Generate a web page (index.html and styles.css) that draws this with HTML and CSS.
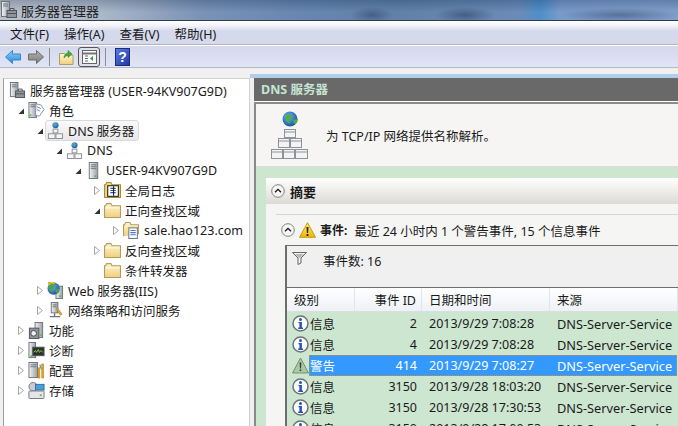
FILE: index.html
```html
<!DOCTYPE html>
<html lang="zh-CN">
<head>
    <meta charset="UTF-8">
    <title>服务器管理器</title>
    <link rel="stylesheet" href="styles.css">
</head>
<body>
    <svg class="defs" width="0" height="0">
        <defs>
            <linearGradient id="tower" x1="0" y1="0" x2="1" y2="0"><stop offset="0" stop-color="#f4f4f4"/><stop offset="1" stop-color="#9a9ea4"/></linearGradient>
            <linearGradient id="fold" x1="0" y1="0" x2="0" y2="1"><stop offset="0" stop-color="#fff6cf"/><stop offset="1" stop-color="#f0cf7e"/></linearGradient>
            <radialGradient id="globe" cx=".4" cy=".35" r=".7"><stop offset="0" stop-color="#6fb4e8"/><stop offset="1" stop-color="#14509c"/></radialGradient>
            <linearGradient id="tri" x1="0" y1="0" x2="0" y2="1"><stop offset="0" stop-color="#fff27a"/><stop offset="1" stop-color="#f0b400"/></linearGradient>
            <linearGradient id="backArrow" x1="0" y1="0" x2="0" y2="1"><stop offset="0" stop-color="#8fd0f8"/><stop offset="1" stop-color="#1f8ade"/></linearGradient>
            <linearGradient id="fwdArrow" x1="0" y1="0" x2="0" y2="1"><stop offset="0" stop-color="#b4b4b0"/><stop offset="1" stop-color="#7c7c78"/></linearGradient>

            <symbol id="a-open" viewBox="0 0 8 9"><path d="M7 2.500V8H1.500z" fill="#333"/></symbol>
            <symbol id="a-closed" viewBox="0 0 8 9"><path d="M1.500 .5L6.500 4.500 1.500 8.500z" fill="#fff" stroke="#a6a6a6"/></symbol>

            <symbol id="i-tower" viewBox="0 0 16 18">
                <rect x="3.500" y=".5" width="9" height="17" fill="url(#tower)" stroke="#6e747c"/>
                <path d="M5 3h6M5 5h6M5 7h6" stroke="#70767e"/>
                <rect x="9" y="14" width="2" height="2" fill="#59c03c"/>
            </symbol>
            <symbol id="i-manager" viewBox="0 0 16 18">
                <rect x=".5" y=".5" width="8" height="15" fill="url(#tower)" stroke="#6e747c"/>
                <path d="M2 3h5M2 5h5" stroke="#70767e"/>
                <rect x="6" y="9.500" width="9.500" height="7" fill="#8f9499" stroke="#50555b"/>
                <path d="M9 9.500v-2h4v2M6 12.500h9.500" fill="none" stroke="#50555b"/>
            </symbol>
            <symbol id="i-role" viewBox="0 0 17 18">
                <rect x=".5" y=".5" width="8" height="16" fill="url(#tower)" stroke="#6e747c"/>
                <path d="M2 3h5M2 5h5" stroke="#70767e"/>
                <rect x="1" y="13" width="2" height="2" fill="#59c03c"/>
                <path d="M8 2l5 1 3.500 5-5 7-4-1z" fill="#fdfdfd" stroke="#7f8fa8"/>
                <path d="M9 5l4 2M9 8l3 1.500" stroke="#5d86c0"/>
            </symbol>
            <symbol id="i-dns" viewBox="0 0 18 18">
                <circle cx="9" cy="3.500" r="3.200" fill="url(#globe)"/>
                <path d="M7.500 2l2 .5-1 2z" fill="#4fae46"/>
                <rect x="6.500" y="7.500" width="5" height="4" fill="#f6f6f6" stroke="#8a8e96"/>
                <rect x="1.500" y="12.500" width="7" height="5" fill="#f6f6f6" stroke="#8a8e96"/>
                <rect x="9.500" y="12.500" width="7" height="5" fill="#f6f6f6" stroke="#8a8e96"/>
            </symbol>
            <symbol id="i-dns-large" viewBox="0 0 38 48">
                <circle cx="19" cy="8" r="7.500" fill="url(#globe)"/>
                <path d="M15 3l5 1 1 3-3 2 1 4-4-3zM22 9l5-1-1 4-3 1z" fill="#4fae46"/>
                <g fill="#f3f3f3" stroke="#8e9299">
                    <rect x="13.500" y="18.500" width="11" height="8"/>
                    <rect x="7.500" y="27.500" width="11" height="9"/>
                    <rect x="19.500" y="27.500" width="11" height="9"/>
                    <rect x=".5" y="38.500" width="11" height="9"/>
                    <rect x="12.500" y="38.500" width="11" height="9"/>
                    <rect x="24.500" y="38.500" width="12" height="9"/>
                </g>
                <path d="M14 21h10M8 30h10M20 30h10M1 41h10M13 41h10M25 41h11" stroke="#8e9299"/>
            </symbol>
            <symbol id="i-folder" viewBox="0 0 16 14">
                <path d="M.5 13.500v-11h1l1-2h4l1 2h8v11z" fill="url(#fold)" stroke="#b59b5c"/>
                <path d="M1.500 4.500h13" stroke="#fffbe6"/>
            </symbol>
            <symbol id="i-zone" viewBox="0 0 16 16">
                <path d="M.5 13.500v-11h1l1-2h4l1 2h7v9" fill="url(#fold)" stroke="#b59b5c"/>
                <rect x="5.500" y="5.500" width="8" height="10" fill="#fff" stroke="#6c7a90"/>
                <path d="M7 8h5M7 10h5M7 12h5" stroke="#4f78b8"/>
            </symbol>
            <symbol id="i-log" viewBox="0 0 16 16">
                <path d="M.5 14.500v-12h1l1-2h4l1 2h8v12z" fill="#f4d474" stroke="#a58a40"/>
                <rect x="3.500" y="3.500" width="10" height="10" fill="#fff" stroke="#222"/>
                <path d="M6 6h5M6 8h5M6 10h5" stroke="#2456a8"/>
                <path d="M9 4v9" stroke="#222"/>
            </symbol>
            <symbol id="i-web" viewBox="0 0 18 18">
                <rect x="9.500" y="4.500" width="7" height="13" fill="url(#tower)" stroke="#6e747c"/>
                <rect x="13" y="14" width="2" height="2" fill="#59c03c"/>
                <circle cx="7" cy="7" r="6.500" fill="url(#globe)"/>
                <path d="M2 3l5-1 1 4-3 2 1 4-3-3zM9 8l4-1-1 4-2 1z" fill="#48a83e"/>
                <path d="M1 0h4L4 3H1zM6 0h3L8 2H5z" fill="#e8b020"/>
            </symbol>
            <symbol id="i-policy" viewBox="0 0 18 18">
                <rect x="4.500" y=".5" width="7" height="11" fill="url(#tower)" stroke="#6e747c"/>
                <path d="M6 3h4M6 5h4" stroke="#70767e"/>
                <path d="M8 12v3M3 15.500h11" stroke="#6e747c" stroke-width="1.500"/>
                <path d="M11 6l5 7-2 1-4-6z" fill="#e2a82a" stroke="#9a6f14" stroke-width=".5"/>
            </symbol>
            <symbol id="i-feature" viewBox="0 0 16 18">
                <rect x="6.500" y=".5" width="8" height="16" fill="url(#tower)" stroke="#6e747c"/>
                <rect x=".5" y="6.500" width="10" height="11" fill="#8f949a" stroke="#50555b"/>
                <circle cx="5" cy="12" r="3" fill="#eef0f2" stroke="#3f444a"/>
                <rect x="12" y="13" width="2" height="2" fill="#59c03c"/>
            </symbol>
            <symbol id="i-diag" viewBox="0 0 17 18">
                <rect x=".5" y=".5" width="7" height="16" fill="url(#tower)" stroke="#6e747c"/>
                <rect x="4.500" y="5.500" width="12" height="9" fill="#2c3228" stroke="#50555b"/>
                <path d="M5.500 11l2-2 1 2 2-3 1 3 2-2 1.500 2" fill="none" stroke="#7ad04c"/>
                <rect x="2" y="14" width="2" height="2" fill="#59c03c"/>
            </symbol>
            <symbol id="i-config" viewBox="0 0 17 18">
                <rect x=".5" y=".5" width="9" height="16" fill="url(#tower)" stroke="#6e747c"/>
                <path d="M2 3h6M2 5h6" stroke="#70767e"/>
                <path d="M10 6h2v11h-2zM14 2h2v15h-2z" fill="#e8a81e" stroke="#9a6f14" stroke-width=".5"/>
                <path d="M12 3l2 5" stroke="#8a8e96" stroke-width="1.500"/>
            </symbol>
            <symbol id="i-storage" viewBox="0 0 17 18">
                <circle cx="5" cy="5" r="4.500" fill="#c8ccd0" stroke="#74797f"/>
                <rect x="7.500" y="2.500" width="9" height="6" fill="#4c9ed8" stroke="#2d6fa8"/>
                <rect x=".5" y="9.500" width="16" height="8" rx="1" fill="#e4e6e8" stroke="#6e747c"/>
                <rect x="12" y="13" width="2" height="2" fill="#59c03c"/>
            </symbol>
            <symbol id="i-info" viewBox="0 0 17 17">
                <circle cx="8.500" cy="8.500" r="7.500" fill="#fbfbfb" stroke="#6f7378" stroke-width="1.500"/>
                <circle cx="8.500" cy="4.600" r="1.500" fill="#2a52b8"/>
                <path d="M6.500 7h3.400v5.500h1.100V14H6.200v-1.500h1.200V8.300H6.500z" fill="#2a52b8"/>
            </symbol>
            <symbol id="i-warn" viewBox="0 0 17 17">
                <path d="M8.500 1L16.500 16H.5z" fill="#a9c9a4" stroke="#748f75"/>
                <path d="M7.600 5.500h1.800l-.4 6H8zM7.700 12.500h1.600V14H7.700z" fill="#2e4030"/>
            </symbol>
            <symbol id="i-warn-yellow" viewBox="0 0 17 16">
                <path d="M8.500 .7L16.500 15.300H.5z" fill="url(#tri)" stroke="#c89a10"/>
                <path d="M7.500 5h2l-.4 6H7.900zM7.600 12h1.800v2H7.600z" fill="#222"/>
            </symbol>
            <symbol id="i-collapse" viewBox="0 0 14 14">
                <circle cx="7" cy="7" r="6.300" fill="#f6f6f6" stroke="#808080"/>
                <path d="M4 8.300L7 5.300l3 3" fill="none" stroke="#111" stroke-width="1.300"/>
            </symbol>
        </defs>
    </svg>

    <header class="titlebar">
        <svg class="icon-16"><use href="#i-manager"/></svg>
        <span>服务器管理器</span>
    </header>

    <nav class="menubar">
        <span>文件(F)</span>
        <span>操作(A)</span>
        <span>查看(V)</span>
        <span>帮助(H)</span>
    </nav>

    <div class="toolbar">
        <svg class="tool" width="16" height="14" viewBox="0 0 16 14"><path d="M.5 7L7.500.5v3.500h8v6h-8v3.500z" fill="url(#backArrow)" stroke="#3a84c8"/></svg>
        <svg class="tool tool-fwd" width="16" height="14" viewBox="0 0 16 14"><path d="M15.500 7L8.500.5v3.500h-8v6h8v3.500z" fill="url(#fwdArrow)" stroke="#6c6c68"/></svg>
        <i class="tool-sep"></i>
        <svg class="tool tool-up" width="15" height="16" viewBox="0 0 15 16"><path d="M.5 15.500v-11h5l1 1.500h7.500v9.500z" fill="url(#fold)" stroke="#b59b5c"/><path d="M5 9c0-3 2-5 4-5V1.500L13 5l-4 3.500V6.500C7.500 6.500 6 7.500 5 9z" fill="#3fae3c" stroke="#257a24" stroke-width=".5"/></svg>
        <span class="tool-toggle">
            <svg width="15" height="14" viewBox="0 0 15 14"><rect x=".5" y=".5" width="14" height="13" fill="#fafafa" stroke="#666"/><path d="M1 3.500h13" stroke="#777" stroke-width="2"/><path d="M3 6h3M3 8.500h3M3 11h3" stroke="#667"/><path d="M11 6v5l-3-2.500z" fill="#2aa040"/></svg>
        </span>
        <i class="tool-sep"></i>
        <span class="tool-help">?</span>
    </div>

    <div class="panes">
        <aside class="tree">
            <div class="node lvl-root"><svg class="node-icon"><use href="#i-manager"/></svg><span>服务器管理器 (USER-94KV907G9D)</span></div>
            <div class="node lvl-1"><svg class="arrow"><use href="#a-open"/></svg><svg class="node-icon"><use href="#i-role"/></svg><span>角色</span></div>
            <div class="node lvl-2"><svg class="arrow"><use href="#a-open"/></svg><div class="node-sel"><svg class="node-icon"><use href="#i-dns"/></svg><span>DNS 服务器</span></div></div>
            <div class="node lvl-3"><svg class="arrow"><use href="#a-open"/></svg><svg class="node-icon"><use href="#i-dns"/></svg><span>DNS</span></div>
            <div class="node lvl-4"><svg class="arrow"><use href="#a-open"/></svg><svg class="node-icon"><use href="#i-tower"/></svg><span>USER-94KV907G9D</span></div>
            <div class="node lvl-5"><svg class="arrow"><use href="#a-closed"/></svg><svg class="node-icon"><use href="#i-log"/></svg><span>全局日志</span></div>
            <div class="node lvl-5"><svg class="arrow"><use href="#a-open"/></svg><svg class="node-icon"><use href="#i-folder"/></svg><span>正向查找区域</span></div>
            <div class="node lvl-6"><svg class="arrow"><use href="#a-closed"/></svg><svg class="node-icon"><use href="#i-zone"/></svg><span>sale.hao123.com</span></div>
            <div class="node lvl-5"><svg class="arrow"><use href="#a-closed"/></svg><svg class="node-icon"><use href="#i-folder"/></svg><span>反向查找区域</span></div>
            <div class="node lvl-5"><svg class="arrow arrow-none"></svg><svg class="node-icon"><use href="#i-folder"/></svg><span>条件转发器</span></div>
            <div class="node lvl-2"><svg class="arrow"><use href="#a-closed"/></svg><svg class="node-icon"><use href="#i-web"/></svg><span>Web 服务器(IIS)</span></div>
            <div class="node lvl-2"><svg class="arrow"><use href="#a-closed"/></svg><svg class="node-icon"><use href="#i-policy"/></svg><span>网络策略和访问服务</span></div>
            <div class="node lvl-1"><svg class="arrow"><use href="#a-closed"/></svg><svg class="node-icon"><use href="#i-feature"/></svg><span>功能</span></div>
            <div class="node lvl-1"><svg class="arrow"><use href="#a-closed"/></svg><svg class="node-icon"><use href="#i-diag"/></svg><span>诊断</span></div>
            <div class="node lvl-1"><svg class="arrow"><use href="#a-closed"/></svg><svg class="node-icon"><use href="#i-config"/></svg><span>配置</span></div>
            <div class="node lvl-1"><svg class="arrow"><use href="#a-closed"/></svg><svg class="node-icon"><use href="#i-storage"/></svg><span>存储</span></div>
        </aside>

        <main class="detail">
            <h2 class="detail-title">DNS 服务器</h2>
            <div class="detail-body">
                <div class="intro">
                    <svg class="intro-icon"><use href="#i-dns-large"/></svg>
                    <p>为 TCP/IP 网络提供名称解析。</p>
                </div>
                <section class="card">
                    <div class="card-head">
                        <svg class="collapse"><use href="#i-collapse"/></svg>
                        <strong>摘要</strong>
                    </div>
                    <div class="card-body">
                        <div class="events-line">
                            <svg class="collapse"><use href="#i-collapse"/></svg>
                            <svg class="warn-icon"><use href="#i-warn-yellow"/></svg>
                            <strong>事件:</strong>
                            <span>最近 24 小时内 1 个警告事件, 15 个信息事件</span>
                        </div>
                        <div class="grid-box">
                            <div class="filter">
                                <svg width="15" height="13" viewBox="0 0 15 13"><path d="M.5.5h14L9 6v5l-3 1.500V6z" fill="#f2f2f2" stroke="#666"/><path d="M3 2h9L8 6H7z" fill="#b8b8b8"/></svg>
                                <span>事件数: 16</span>
                            </div>
                            <div class="row row-head">
                                <span class="col-level">级别</span>
                                <span class="col-id">事件 ID</span>
                                <span class="col-date">日期和时间</span>
                                <span class="col-src">来源</span>
                            </div>
                            <div class="rows">
                                <div class="row"><svg class="row-icon"><use href="#i-info"/></svg><span class="col-name">信息</span><span class="col-id">2</span><span class="col-date">2013/9/29 7:08:28</span><span class="col-src">DNS-Server-Service</span></div>
                                <div class="row"><svg class="row-icon"><use href="#i-info"/></svg><span class="col-name">信息</span><span class="col-id">4</span><span class="col-date">2013/9/29 7:08:28</span><span class="col-src">DNS-Server-Service</span></div>
                                <div class="row row-sel"><svg class="row-icon"><use href="#i-warn"/></svg><div class="row-sel-fill"><span class="col-name">警告</span><span class="col-id">414</span><span class="col-date">2013/9/29 7:08:27</span><span class="col-src">DNS-Server-Service</span></div></div>
                                <div class="row"><svg class="row-icon"><use href="#i-info"/></svg><span class="col-name">信息</span><span class="col-id">3150</span><span class="col-date">2013/9/28 18:03:20</span><span class="col-src">DNS-Server-Service</span></div>
                                <div class="row"><svg class="row-icon"><use href="#i-info"/></svg><span class="col-name">信息</span><span class="col-id">3150</span><span class="col-date">2013/9/28 17:30:53</span><span class="col-src">DNS-Server-Service</span></div>
                                <div class="row"><svg class="row-icon"><use href="#i-info"/></svg><span class="col-name">信息</span><span class="col-id">3150</span><span class="col-date">2013/9/28 17:00:53</span><span class="col-src">DNS-Server-Service</span></div>
                            </div>
                        </div>
                    </div>
                </section>
            </div>
        </main>
    </div>
</body>
</html>
```

FILE: styles.css
```css
html, body {
    height: 100%;
}
body {
    margin: 0;
    width: 678px;
    height: 426px;
    overflow: hidden;
    font-family: "Noto Sans", "Noto Sans CJK SC", sans-serif;
    font-size: 12.5px;
    color: #1a1a1a;
    background-color: #f0f0f0;
    display: flex;
    flex-direction: column;
}
.defs {
    flex: none;
}
.titlebar {
    height: 20px;
    flex: none;
    display: flex;
    align-items: center;
    gap: 4px;
    padding-left: 1px;
    font-size: 13px;
    color: #222;
    border-bottom: 1px solid #2f3c50;
    background:
        radial-gradient(ellipse 22px 8px at 372px 15px, rgba(40, 60, 95, 0.5), transparent),
        radial-gradient(ellipse 30px 8px at 465px 15px, rgba(40, 60, 95, 0.55), transparent),
        radial-gradient(ellipse 60px 7px at 620px 15px, rgba(40, 60, 95, 0.45), transparent),
        linear-gradient(180deg, rgba(40, 60, 90, 0.25), rgba(255, 255, 255, 0.08) 60%),
        linear-gradient(90deg, #b4bcc8 0, #a6b2c4 100px, #6f8ab0 200px, #5a7cab 300px, #54779f 400px, #5e82b2 520px, #3f86c4 540px, #6e92c4 560px, #7596c6 678px);
}
.icon-16 {
    width: 16px;
    height: 18px;
}
.menubar {
    height: 24px;
    flex: none;
    display: flex;
    align-items: center;
    gap: 15px;
    padding: 1px 0 0 10px;
    box-sizing: border-box;
    border-bottom: 1px solid #b4b4b8;
    background: linear-gradient(180deg, #ffffff 0, #f0f2f8 5px, #d5d9ec 10px, #d5d9ec 100%);
}
.toolbar {
    height: 23px;
    flex: none;
    display: flex;
    align-items: center;
    padding-left: 5px;
    box-sizing: border-box;
    border-top: 1px solid #ffffff;
    border-bottom: 1px solid #b2b6c8;
    background: linear-gradient(180deg, #d4d8ec, #e0e5f6);
}
.tool-fwd {
    margin-left: 7px;
}
.tool-sep {
    width: 1px;
    height: 18px;
    margin: 0 4px 0 5px;
    background-color: #8c8c94;
}
.tool-up {
    margin-left: 5px;
    margin-right: 4px;
}
.tool-toggle {
    width: 22px;
    height: 20px;
    box-sizing: border-box;
    display: flex;
    align-items: center;
    justify-content: center;
    border: 1px solid #555;
    border-radius: 3px;
    background-color: #dfe2ea;
}
.tool-help {
    width: 13px;
    height: 16px;
    margin-left: 5px;
    display: block;
    text-align: center;
    font: bold 14px/16px "Liberation Sans", sans-serif;
    color: #ffffff;
    border: 1px solid #1c2a80;
    background: linear-gradient(135deg, #5c7ce0, #2038a8);
}
.panes {
    flex: 1;
    min-height: 0;
    display: flex;
    padding-top: 6px;
}
.tree {
    width: 245px;
    margin: 4px 0 0 3px;
    padding-top: 1px;
    flex: none;
    background-color: #ffffff;
    border-left: 1px solid #9c9c9c;
    border-top: 1px solid #d0d0d0;
    border-right: 1px solid #d0d0d0;
}
.node {
    height: 20px;
    display: flex;
    align-items: center;
    white-space: nowrap;
}
.lvl-root { padding-left: 5px; }
.lvl-1 { padding-left: 13px; }
.lvl-2 { padding-left: 32px; }
.lvl-3 { padding-left: 51px; }
.lvl-4 { padding-left: 70px; }
.lvl-5 { padding-left: 89px; }
.lvl-6 { padding-left: 108px; }
.arrow {
    width: 8px;
    height: 9px;
    margin-right: 3px;
    flex: none;
}
.node-icon {
    width: 17px;
    height: 17px;
    margin-right: 4px;
    flex: none;
}
.node-sel {
    height: 19px;
    display: flex;
    align-items: center;
    padding: 0 4px 0 1px;
    margin-left: -2px;
    border: 1px solid #d9d9d9;
    border-radius: 3px;
    background: linear-gradient(180deg, #fafafa, #e8e8e8);
}
.detail {
    flex: 1;
    min-width: 0;
    border-top: 4px solid #b2cde6;
    padding-left: 4px;
    display: flex;
    flex-direction: column;
}
.detail-title {
    height: 23px;
    margin: 0;
    padding-left: 7px;
    flex: none;
    font-size: 12.5px;
    font-weight: bold;
    line-height: 24px;
    color: #c6e4d2;
    background-color: #696969;
    border-bottom: 1px solid #ffffff;
}
.detail-body {
    flex: 1;
    min-height: 0;
    overflow: hidden;
    background-color: #cde6d0;
    border-top: 2px solid #8a8a8a;
    border-left: 2px solid #8a8a8a;
}
.intro {
    height: 62px;
    display: flex;
    align-items: center;
    background-color: #f6f5f3;
    border-bottom: 1px solid #dcdcdc;
}
.intro-icon {
    width: 38px;
    height: 48px;
    margin-left: 15px;
}
.intro p {
    margin: 0 0 0 17px;
}
.card {
    margin: 11px 0 0 10px;
    background-color: #f5f5f3;
}
.card-head {
    height: 26px;
    display: flex;
    align-items: center;
    gap: 5px;
    padding-left: 5px;
    background: linear-gradient(180deg, #ffffff, #dcdad5);
}
.card-head strong {
    font-size: 13px;
}
.collapse {
    width: 14px;
    height: 14px;
    flex: none;
}
.card-body {
    padding: 10px 0 0 10px;
}
.events-line {
    height: 30px;
    display: flex;
    align-items: center;
    gap: 4px;
    border-top: 1px solid #d6d6d6;
    padding-left: 5px;
}
.warn-icon {
    width: 17px;
    height: 16px;
}
.events-line strong {
    font-size: 12px;
}
.events-line span {
    margin-left: 3px;
}
.grid-box {
    margin-left: 9px;
    border: 1px solid #6e6e6e;
    border-width: 1px 0 0 2px;
}
.filter {
    height: 42px;
    padding: 5px 0 0 5px;
    box-sizing: border-box;
    display: flex;
    align-items: flex-start;
    gap: 16px;
    background-color: #f0f0f0;
    border-bottom: 1px solid #6e6e6e;
}
.filter svg {
    margin-top: 1px;
}
.row {
    height: 21px;
    display: flex;
    align-items: center;
    white-space: nowrap;
}
.row-head {
    height: 23px;
    background: linear-gradient(180deg, #ffffff, #eef1f6);
    border-bottom: 1px solid #d8dee6;
}
.row-head span {
    height: 100%;
    line-height: 25px;
    box-sizing: border-box;
    border-right: 1px solid #e2e5ea;
}
.rows {
    padding-top: 1px;
    background-color: #cde6d0;
}
.col-level {
    width: 68px;
    padding-left: 7px;
    box-sizing: border-box;
}
.row-icon {
    width: 17px;
    height: 17px;
    margin-left: 5px;
    flex: none;
}
.col-name {
    width: 46px;
    padding-left: 1px;
    box-sizing: border-box;
}
.col-id {
    width: 67px;
    padding-right: 5px;
    box-sizing: border-box;
    text-align: right;
}
.col-date {
    width: 128px;
    padding-left: 7px;
    box-sizing: border-box;
}
.col-src {
    padding-left: 7px;
    flex: 1;
}
.rows .col-src {
    font-size: 12.75px;
}
.row-sel {
    margin-right: 1px;
}
.row-sel-fill {
    flex: 1;
    height: 100%;
    display: flex;
    align-items: center;
    color: #ffffff;
    background-color: #3399ff;
    outline: 1px dotted #d88a30;
    outline-offset: -1px;
}
```
